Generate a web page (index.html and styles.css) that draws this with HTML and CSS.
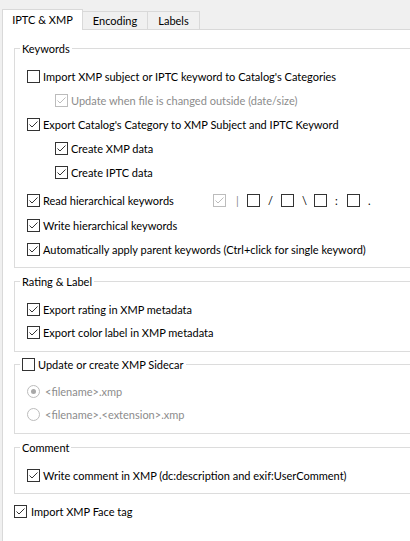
FILE: index.html
```html
<!DOCTYPE html>
<html>
<head>
<meta charset="utf-8">
<link rel="stylesheet" href="styles.css">
</head>
<body>
<div class="tabs">
  <div class="tab active">IPTC &amp; XMP</div>
  <div class="tab t-enc">Encoding</div>
  <div class="tab t-lab">Labels</div>
</div>
<div class="panel">
  <fieldset class="group g-keywords">
    <legend>Keywords</legend>
    <div class="row">
      <span class="cb"></span><span>Import XMP subject or IPTC keyword to Catalog's Categories</span>
    </div>
    <div class="row sub disabled">
      <span class="cb dis"><svg viewBox="0 0 11 11"><polyline points="1.5,5.5 4,8 9.5,2.5"/></svg></span><span>Update when file is changed outside (date/size)</span>
    </div>
    <div class="row">
      <span class="cb"><svg viewBox="0 0 11 11"><polyline points="1.5,5.5 4,8 9.5,2.5"/></svg></span><span>Export Catalog's Category to XMP Subject and IPTC Keyword</span>
    </div>
    <div class="row sub">
      <span class="cb"><svg viewBox="0 0 11 11"><polyline points="1.5,5.5 4,8 9.5,2.5"/></svg></span><span>Create XMP data</span>
    </div>
    <div class="row sub">
      <span class="cb"><svg viewBox="0 0 11 11"><polyline points="1.5,5.5 4,8 9.5,2.5"/></svg></span><span>Create IPTC data</span>
    </div>
    <div class="row hier">
      <span class="cb"><svg viewBox="0 0 11 11"><polyline points="1.5,5.5 4,8 9.5,2.5"/></svg></span><span class="hier-label">Read hierarchical keywords</span>
      <div class="seps">
        <div class="sep"><span class="cb dis"><svg viewBox="0 0 11 11"><polyline points="1.5,5.5 4,8 9.5,2.5"/></svg></span><span class="ch ch-dis">|</span></div>
        <div class="sep"><span class="cb"></span><span class="ch">/</span></div>
        <div class="sep"><span class="cb"></span><span class="ch">\</span></div>
        <div class="sep"><span class="cb"></span><span class="ch">:</span></div>
        <div class="sep"><span class="cb"></span><span class="ch">.</span></div>
      </div>
    </div>
    <div class="row r-write">
      <span class="cb"><svg viewBox="0 0 11 11"><polyline points="1.5,5.5 4,8 9.5,2.5"/></svg></span><span>Write hierarchical keywords</span>
    </div>
    <div class="row">
      <span class="cb"><svg viewBox="0 0 11 11"><polyline points="1.5,5.5 4,8 9.5,2.5"/></svg></span><span>Automatically apply parent keywords (Ctrl+click for single keyword)</span>
    </div>
  </fieldset>

  <fieldset class="group g-rating">
    <legend>Rating &amp; Label</legend>
    <div class="row row23">
      <span class="cb"><svg viewBox="0 0 11 11"><polyline points="1.5,5.5 4,8 9.5,2.5"/></svg></span><span>Export rating in XMP metadata</span>
    </div>
    <div class="row row23">
      <span class="cb"><svg viewBox="0 0 11 11"><polyline points="1.5,5.5 4,8 9.5,2.5"/></svg></span><span>Export color label in XMP metadata</span>
    </div>
  </fieldset>

  <fieldset class="group g-sidecar">
    <legend class="legend-check"><span class="cb"></span><span>Update or create XMP Sidecar</span></legend>
    <div class="row row23 disabled">
      <span class="rb"><span class="dot"></span></span><span>&lt;filename&gt;.xmp</span>
    </div>
    <div class="row row23 disabled">
      <span class="rb"></span><span>&lt;filename&gt;.&lt;extension&gt;.xmp</span>
    </div>
  </fieldset>

  <fieldset class="group g-comment">
    <legend>Comment</legend>
    <div class="row">
      <span class="cb"><svg viewBox="0 0 11 11"><polyline points="1.5,5.5 4,8 9.5,2.5"/></svg></span><span>Write comment in XMP (dc:description and exif:UserComment)</span>
    </div>
  </fieldset>

  <div class="row face">
    <span class="cb"><svg viewBox="0 0 11 11"><polyline points="1.5,5.5 4,8 9.5,2.5"/></svg></span><span>Import XMP Face tag</span>
  </div>
</div>
</body>
</html>
```

FILE: styles.css
```css
html, body {
  margin: 0;
  padding: 0;
}
body {
  width: 410px;
  height: 541px;
  overflow: hidden;
  background: #f0f0f0;
  font-family: Lato, "Liberation Sans", sans-serif;
  font-size: 11px;
  line-height: 15px;
  color: #000;
}

/* Tabs */
.tabs {
  display: flex;
  align-items: flex-start;
  height: 21px;
  padding: 9px 0 0 2px;
}
.tab {
  box-sizing: border-box;
  text-align: center;
  border-top: 1px solid #d9d9d9;
  border-right: 1px solid #d9d9d9;
  background: #f0f0f0;
  margin-top: 2px;
  height: 18px;
  padding-top: 1px;
  white-space: nowrap;
}
.tab.active {
  position: relative;
  z-index: 1;
  background: #fff;
  border-left: 1px solid #d9d9d9;
  width: 81px;
  height: 21px;
  margin-top: 0;
  padding-top: 2px;
}
.t-enc { width: 65px; }
.t-lab { width: 52px; }

/* Panel */
.panel {
  box-sizing: border-box;
  margin: -1px 0 0 2px;
  width: 408px;
  height: 521px;
  overflow: hidden;
  background: #fff;
  border-top: 1px solid #d9d9d9;
  border-left: 1px solid #d9d9d9;
}

/* Groups */
.group {
  box-sizing: border-box;
  width: 430px;
  margin: 0 0 0 11px;
  border: 1px solid #dcdcdc;
  padding: 0;
  min-width: 0;
}
.group legend {
  margin-left: 5px;
  padding: 0 2px;
  height: 15px;
  line-height: 15px;
}
.legend-check {
  display: flex;
  align-items: center;
}
.g-keywords { margin-top: 11px; padding: 8px 0 6px; }
.g-rating { margin-top: 6px; padding: 9px 0 7px; }
.g-sidecar { margin-top: 5px; padding: 8px 0 7px; }
.g-comment { margin-top: 6px; padding: 8px 0 6px; }

/* Rows */
.row {
  display: flex;
  align-items: center;
  height: 24px;
  padding-left: 12px;
  white-space: nowrap;
}
.row23 { height: 23px; }
.row.sub { padding-left: 40px; }
.row.hier { margin-top: 4px; margin-bottom: 1px; }
.row.face { margin-top: 5px; padding-left: 11px; }
.row.face .cb { margin-right: 4px; }
.disabled { color: #8c8c8c; }

.hier-label { width: 170px; }
.seps {
  display: grid;
  grid-template-columns: 34px 34px 33px 33px auto;
}
.sep {
  display: flex;
  align-items: center;
}
.ch { margin-left: 5px; }
.ch-dis { color: #8a8a8a; margin-left: 7px; }

/* Checkbox */
.cb {
  flex: none;
  box-sizing: border-box;
  width: 13px;
  height: 13px;
  border: 1px solid #333;
  background: #fff;
  margin-right: 3px;
  color: #333;
}
.cb svg {
  display: block;
  width: 11px;
  height: 11px;
}
.cb polyline {
  fill: none;
  stroke: currentColor;
  stroke-width: 1;
}
.cb.dis {
  border-color: #bcbcbc;
  color: #bcbcbc;
}
.legend-check .cb { margin-right: 3px; }

/* Radio */
.rb {
  flex: none;
  box-sizing: border-box;
  width: 13px;
  height: 13px;
  border: 1px solid #bcbcbc;
  border-radius: 50%;
  background: #fff;
  margin-right: 5px;
  display: flex;
  align-items: center;
  justify-content: center;
}
.rb .dot {
  width: 5px;
  height: 5px;
  border-radius: 50%;
  background: #a8a8a8;
}
```
